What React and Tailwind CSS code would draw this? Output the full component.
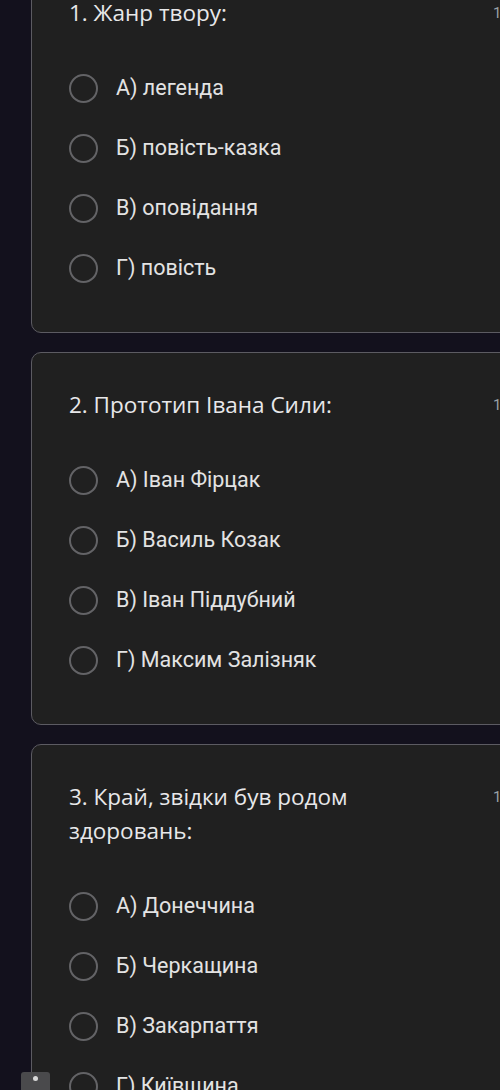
import React from 'react';

const questions = [
    { id: 1, title: '1. Жанр твору:', options: ['А) легенда', 'Б) повість-казка', 'В) оповідання', 'Г) повість'] },
    { id: 2, title: '2. Прототип Івана Сили:', options: ['А) Іван Фірцак', 'Б) Василь Козак', 'В) Іван Піддубний', 'Г) Максим Залізняк'] },
    { id: 3, title: '3. Край, звідки був родом здоровань:', options: ['А) Донеччина', 'Б) Черкащина', 'В) Закарпаття', 'Г) Київщина'] },
];

const QuestionCard = ({ title, options }) => (
    <div className="w-[540px] shrink-0 rounded-[10px] border border-[#5c5b62] bg-[#202020] pl-[37px] pt-[35px] pb-[34px]">
        <div className="flex items-start">
            <h2 className="w-[380px] text-[22.5px] leading-[34px] text-[#e8e8ea] font-['Open_Sans',sans-serif]">{title}</h2>
            <span className="ml-[44px] text-[15px] leading-[34px] text-[#9aa0a6] font-['Roboto',sans-serif]">1 бал</span>
        </div>
        <div className="mt-[28px] flex flex-col">
            {options.map(opt => (
                <label key={opt} className="flex h-[60px] items-center gap-[18px]">
                    <span className="h-[29px] w-[29px] shrink-0 rounded-full border-[2.5px] border-[#636366]" />
                    <span className="text-[21.5px] text-[#e3e3e3] font-['Roboto',sans-serif]">{opt}</span>
                </label>
            ))}
        </div>
    </div>
);

export default function App() {
    return (
        <div className="relative h-[1090px] w-[500px] overflow-hidden bg-[#13111d]">
            <div className="mt-[-40px] flex flex-col gap-[19px] pl-[31px]">
                {questions.map(q => (
                    <QuestionCard key={q.id} title={q.title} options={q.options} />
                ))}
            </div>
            {/* floating side toolbar peeking at the bottom */}
            <div className="absolute left-[21px] top-[1072px] flex h-[30px] w-[29px] justify-center rounded-[3px] bg-[#4a4a4c] pt-[4px]">
                <span className="h-[5px] w-[5px] rounded-full bg-[#d8d8d8]" />
            </div>
        </div>
    );
}
